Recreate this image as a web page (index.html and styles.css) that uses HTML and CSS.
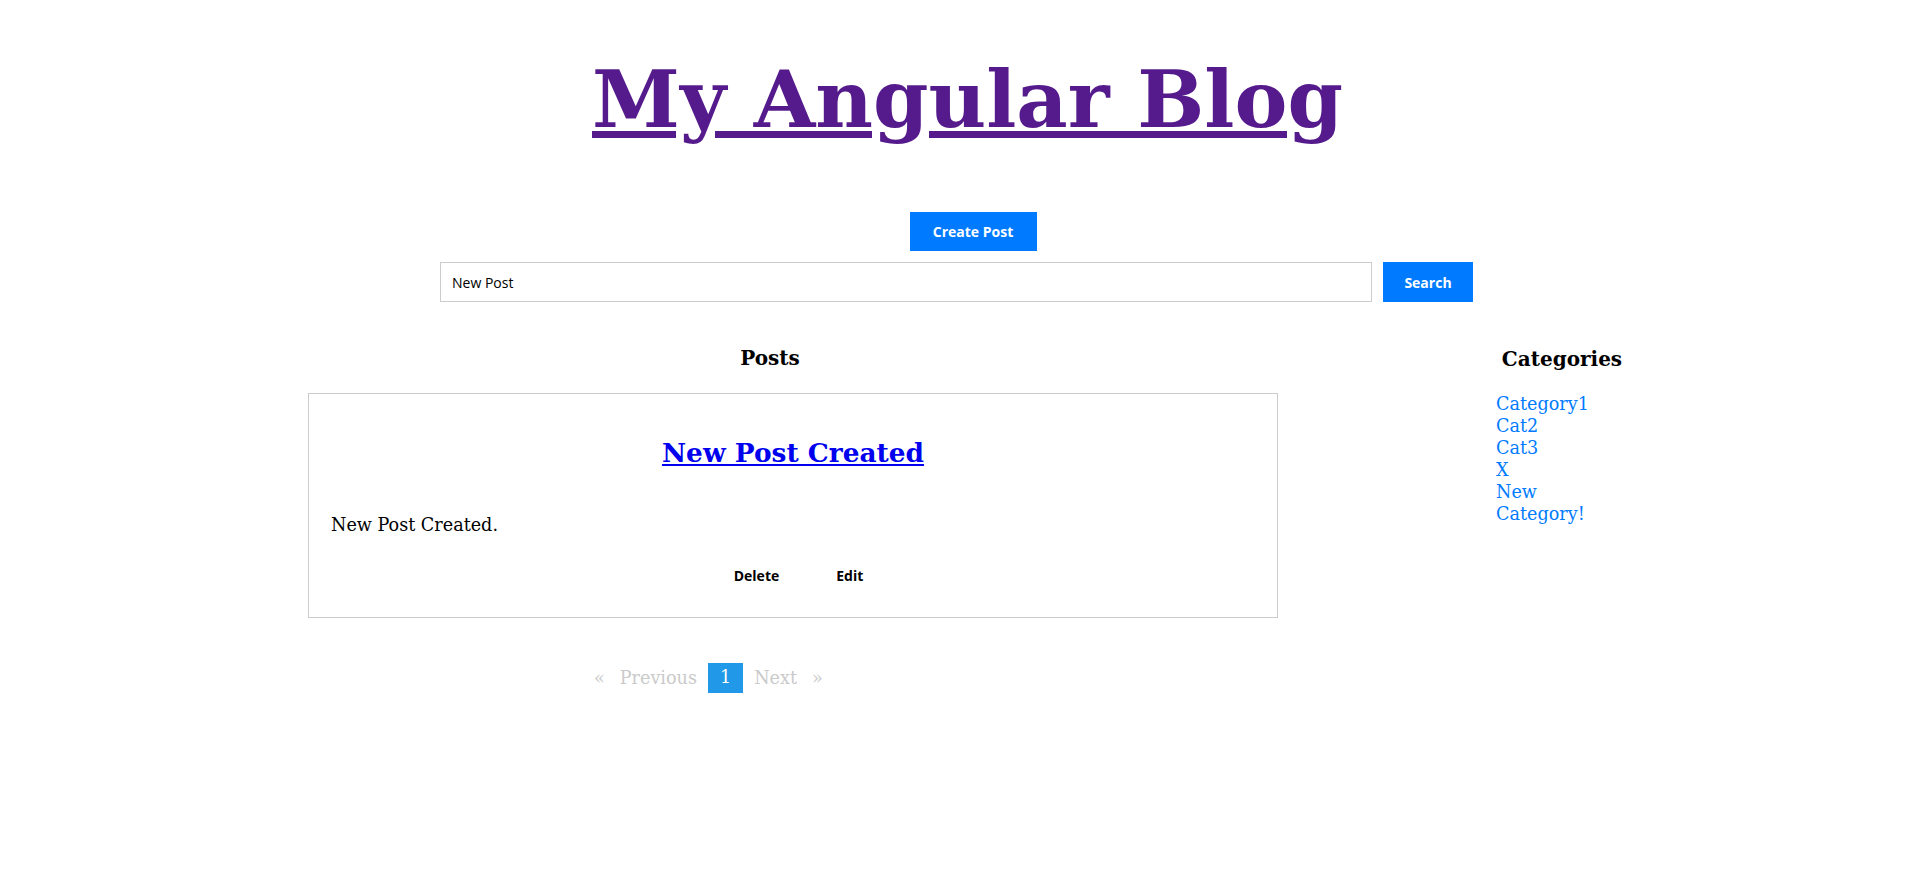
FILE: index.html
```html
<!DOCTYPE html>
<html lang="en">
<head>
<meta charset="utf-8">
<title>My Angular Blog</title>
<link rel="stylesheet" href="styles.css">
</head>
<body>
<header class="site-header">
  <h1 class="site-title"><a href="#" class="site-title-link">My Angular Blog</a></h1>
</header>
<div class="actions">
  <button class="btn btn-primary btn-create">Create Post</button>
</div>
<form class="search-row">
  <input class="search-input" type="text" value="New Post">
  <button class="btn btn-primary btn-search" type="button">Search</button>
</form>
<main class="layout">
  <section class="posts">
    <h2 class="section-title posts-title">Posts</h2>
    <article class="post-card">
      <h3 class="post-title"><a href="#" class="post-link">New Post Created</a></h3>
      <p class="post-body">New Post Created.</p>
      <div class="post-actions">
        <button class="link-btn">Delete</button>
        <button class="link-btn">Edit</button>
      </div>
    </article>
    <ul class="pagination">
      <li class="page-prev disabled"><span class="arrow arrow-left">«</span><span>Previous</span></li>
      <li class="page-current">1</li>
      <li class="page-next disabled"><span>Next</span><span class="arrow arrow-right">»</span></li>
    </ul>
  </section>
  <aside class="categories">
    <h2 class="section-title cat-title">Categories</h2>
    <ul class="cat-list">
      <li><a href="#">Category1</a></li>
      <li><a href="#">Cat2</a></li>
      <li><a href="#">Cat3</a></li>
      <li><a href="#">X</a></li>
      <li><a href="#">New Category!</a></li>
    </ul>
  </aside>
</main>
</body>
</html>
```

FILE: styles.css
```css
html, body {
  margin: 0;
  padding: 0;
  background: #ffffff;
}

body {
  font-family: "DejaVu Serif", serif;
  font-size: 17.6px;
  color: #000;
}

.site-header {
  text-align: center;
  padding-left: 16px;
}

.site-title {
  margin: 53px 0 0;
  font-size: 79.4px;
  font-weight: bold;
  line-height: 92px;
}

.site-title-link {
  color: #551a8b;
  text-decoration: underline;
}

.actions {
  display: flex;
  justify-content: center;
  margin-top: 67px;
  padding-left: 27px;
}

.btn {
  font-family: "Open Sans", sans-serif;
  font-weight: 700;
  font-size: 14px;
  border: none;
  padding: 0;
  cursor: pointer;
}

.btn-primary {
  background: #007bff;
  color: #fff;
}

.btn-create {
  width: 127px;
  height: 39px;
}

.search-row {
  display: flex;
  gap: 11px;
  margin: 11px 0 0 440px;
}

.search-input {
  box-sizing: border-box;
  width: 932px;
  height: 40px;
  border: 1px solid #cccccc;
  padding: 0 11px;
  font-family: "Open Sans", sans-serif;
  font-size: 14px;
  color: #000;
  outline: none;
}

.btn-search {
  width: 90px;
  height: 40px;
}

.layout {
  display: flex;
  margin: 45px 0 0 308px;
}

.posts {
  width: 970px;
}

.section-title {
  margin: 0;
  font-size: 20px;
  font-weight: bold;
  line-height: 23px;
  text-align: center;
}

.posts-title {
  margin-right: 46px;
}

.post-card {
  box-sizing: border-box;
  margin-top: 23px;
  border: 1px solid #cccccc;
  height: 225px;
  padding: 43px 22px 0;
}

.post-title {
  margin: 0;
  text-align: center;
  font-size: 26.4px;
  line-height: 31px;
}

.post-link {
  color: #0000ee;
  text-decoration: underline;
}

.post-body {
  margin: 47px 0 0;
  line-height: 21px;
}

.post-actions {
  display: flex;
  justify-content: center;
  gap: 33px;
  margin-top: 30px;
  padding-left: 11px;
}

.link-btn {
  background: transparent;
  border: none;
  padding: 0 12px;
  font-family: "Open Sans", sans-serif;
  font-weight: 700;
  font-size: 14px;
  line-height: 19px;
  color: #000;
  cursor: pointer;
}

.pagination {
  list-style: none;
  display: flex;
  align-items: center;
  margin: 45px 0 0 286px;
  padding: 0;
  color: #cacaca;
  line-height: 21px;
}

.page-prev, .page-next {
  display: flex;
  align-items: center;
}

.arrow-left {
  margin-right: 15px;
}

.arrow-right {
  margin-left: 15px;
}

.page-current {
  margin: 0 11px 0 11px;
  padding: 4px 12px 5px;
  background: #2199e8;
  color: #fefefe;
}

.categories {
  margin-left: 218px;
  width: 132px;
  padding-top: 1px;
}

.cat-list {
  list-style: none;
  margin: 22px 0 0;
  padding: 0;
  line-height: 22px;
}

.cat-list a {
  color: #007bff;
  text-decoration: none;
}
```
